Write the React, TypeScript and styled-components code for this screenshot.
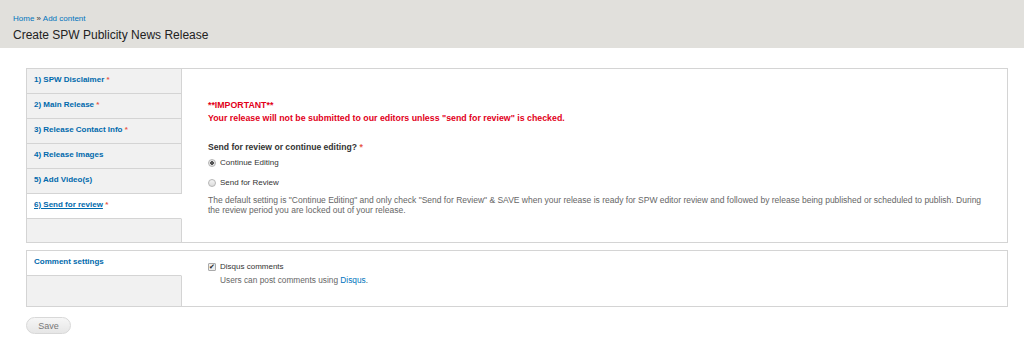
import React from 'react';
import styled, { createGlobalStyle } from 'styled-components';

const GlobalStyle = createGlobalStyle`
  body {
    margin: 0;
    background: #fff;
    font-family: "Liberation Sans", Arial, sans-serif;
    color: #333;
  }
`;

const tabs = [
  { label: '1) SPW Disclaimer', required: true },
  { label: '2) Main Release', required: true },
  { label: '3) Release Contact Info', required: true },
  { label: '4) Release Images', required: false },
  { label: '5) Add Video(s)', required: false },
  { label: '6) Send for review', required: true, active: true },
];

const App = () => {
  return (
    <>
      <GlobalStyle />
      <Header>
        <Breadcrumb>
          <Link href="#">Home</Link> » <Link href="#">Add content</Link>
        </Breadcrumb>
        <Title>Create SPW Publicity News Release</Title>
      </Header>
      <Main>
        <VerticalTabs>
          <TabList>
            {tabs.map((t) => (
              <Tab key={t.label} $active={t.active}>
                <TabLabel $active={t.active}>{t.label}</TabLabel>
                {t.required && <Star> *</Star>}
              </Tab>
            ))}
            <TabFiller />
          </TabList>
          <Pane>
            <Important>**IMPORTANT**</Important>
            <Important>
              Your release will not be submitted to our editors unless "send for review" is checked.
            </Important>
            <FieldLabel>
              Send for review or continue editing? <Star>*</Star>
            </FieldLabel>
            <Option>
              <Radio $checked />
              Continue Editing
            </Option>
            <Option>
              <Radio />
              Send for Review
            </Option>
            <Description>
              The default setting is "Continue Editing" and only check "Send for Review" &amp; SAVE when your
              release is ready for SPW editor review and followed by release being published or scheduled to
              publish. During the review period you are locked out of your release.
            </Description>
          </Pane>
        </VerticalTabs>
        <VerticalTabs $short>
          <TabList>
            <Tab $active>
              <TabLabel>Comment settings</TabLabel>
            </Tab>
            <TabFiller />
          </TabList>
          <Pane $compact>
            <Option>
              <Checkbox>✔</Checkbox>
              Disqus comments
            </Option>
            <Hint>
              Users can post comments using <Link href="#">Disqus</Link>.
            </Hint>
          </Pane>
        </VerticalTabs>
        <SaveButton>Save</SaveButton>
      </Main>
    </>
  );
};

const Header = styled.div`
  background: #e1e0dc;
  height: 48px;
  padding: 14px 13px 0;
  box-sizing: border-box;
`;
const Breadcrumb = styled.div`
  font-size: 8px;
  color: #333;
  line-height: 10px;
`;
const Link = styled.a`
  color: #0074bd;
  text-decoration: none;
`;
const Title = styled.h1`
  margin: 3px 0 0;
  font-size: 12px;
  font-weight: normal;
  color: #222;
  line-height: 16px;
`;
const Main = styled.div`
  padding: 20px 16px 0 26px;
`;
const VerticalTabs = styled.div<{ $short?: boolean }>`
  display: flex;
  border: 1px solid #d4d4d4;
  height: ${(p) => (p.$short ? '57px' : '175px')};
  box-sizing: border-box;
  margin-bottom: 7px;
`;
const TabList = styled.div`
  width: 155px;
  flex-shrink: 0;
  display: flex;
  flex-direction: column;
  background: #f1f1f1;
`;
const Tab = styled.div<{ $active?: boolean }>`
  height: 25px;
  box-sizing: border-box;
  padding: 6px 7px 0;
  font-size: 8px;
  font-weight: bold;
  line-height: 10px;
  background: ${(p) => (p.$active ? '#fff' : '#f1f1f1')};
  border-bottom: 1px solid #d4d4d4;
  border-right: 1px solid ${(p) => (p.$active ? '#fff' : '#d4d4d4')};
`;
const TabLabel = styled.span<{ $active?: boolean }>`
  color: #0069ac;
  text-decoration: ${(p) => (p.$active ? 'underline' : 'none')};
`;
const Star = styled.span`
  color: #e8594a;
`;
const TabFiller = styled.div`
  flex: 1;
  border-right: 1px solid #d4d4d4;
`;
const Pane = styled.div<{ $compact?: boolean }>`
  flex: 1;
  padding: ${(p) => (p.$compact ? '6px 12px 0 26px' : '29px 12px 0 26px')};
  font-size: 8px;
  line-height: 10px;
`;
const Important = styled.div`
  color: #e2001a;
  font-weight: bold;
  font-size: 8.8px;
  line-height: 15px;
  margin-top: -2px;
  &:first-child {
    margin-top: 0;
  }
`;
const FieldLabel = styled.div`
  margin-top: 15px;
  font-weight: bold;
  font-size: 8.6px;
  color: #333;
  line-height: 12px;
`;
const Option = styled.div`
  display: flex;
  align-items: center;
  gap: 4px;
  height: 20px;
  font-size: 8px;
  color: #333;
`;
const Radio = styled.span<{ $checked?: boolean }>`
  width: 8px;
  height: 8px;
  border-radius: 50%;
  box-sizing: border-box;
  border: 1px solid #b5b5b5;
  background: ${(p) =>
    p.$checked
      ? 'radial-gradient(circle, #555 0 1.6px, #e4e4e4 2px)'
      : 'linear-gradient(#f4f4f4, #dcdcdc)'};
`;
const Checkbox = styled.span`
  width: 8px;
  height: 8px;
  box-sizing: border-box;
  border: 1px solid #aaa;
  border-radius: 1px;
  background: #eee;
  font-size: 7px;
  line-height: 6px;
  text-align: center;
  color: #222;
`;
const Description = styled.div`
  margin-top: 2px;
  color: #666;
  font-size: 8.5px;
  line-height: 10px;
  max-width: 790px;
`;
const Hint = styled.div`
  color: #666;
  font-size: 8.3px;
  padding-left: 12px;
  margin-top: -2px;
`;
const SaveButton = styled.button`
  margin-top: 3px;
  width: 45px;
  height: 17px;
  border: 1px solid #d8d8d8;
  border-radius: 9px;
  background: linear-gradient(#f6f6f6, #e6e6e6);
  color: #777;
  font-family: "Liberation Sans", Arial, sans-serif;
  font-size: 9px;
  padding: 0;
`;

export default App;
